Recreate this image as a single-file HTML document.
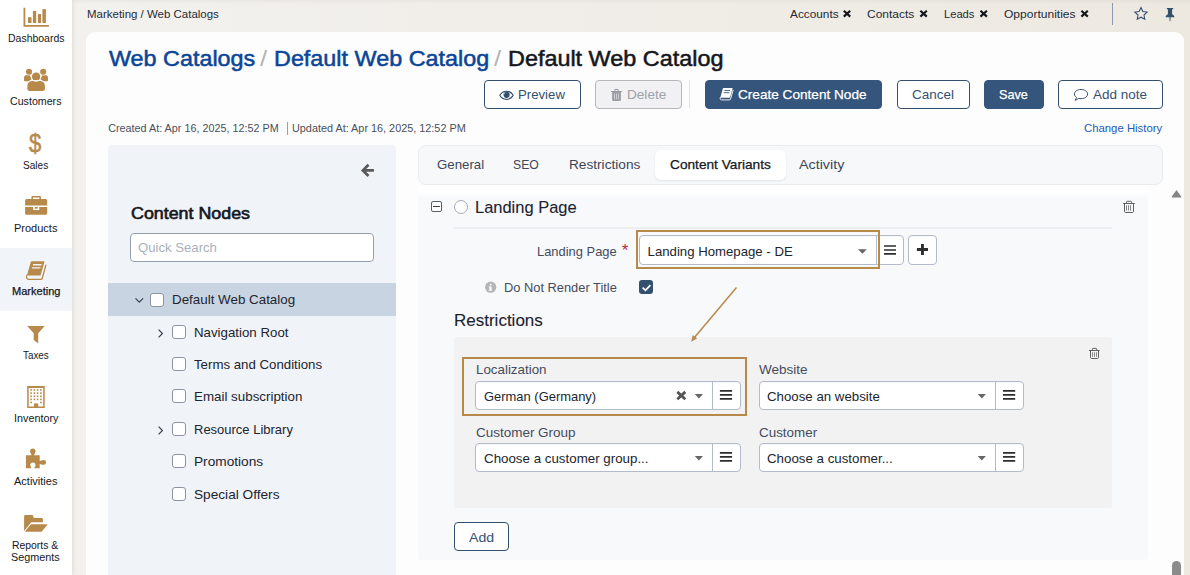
<!DOCTYPE html>
<html lang="en">
<head>
<meta charset="utf-8">
<title>Default Web Catalog - Web Catalogs - Marketing</title>
<style>
*{box-sizing:border-box;margin:0;padding:0}
html,body{width:1190px;height:575px;overflow:hidden}
body{position:relative;font-family:"Liberation Sans",sans-serif;color:#1d2330;background:linear-gradient(90deg,#f3f2ef 0%,#f0ede8 50%,#ede9e1 100%);font-size:13px}
.a,.t{position:absolute}
.t{white-space:nowrap;line-height:1.15;transform-origin:0 50%}
svg{position:absolute;overflow:visible}
.m{-webkit-text-stroke:.35px currentColor}
#side{left:0;top:0;width:72px;height:575px;background:#fff;box-shadow:1px 0 4px rgba(70,60,40,.13)}
#act{left:0;top:248px;width:72px;height:63px;background:#f1f4f9}
#card{left:86px;top:32px;width:1098px;height:543px;background:#fdfdfd;border-radius:9px 9px 0 0}
.btn{position:absolute;top:80px;height:29px;border-radius:4px;border:1px solid #33506f;background:#fff}
.pri{background:#35557c;border-color:#35557c}
.dis{background:#f1f1f3;border-color:#b7b7ba}
#lp{left:108px;top:145px;width:288px;height:430px;background:#f0f3f8;border-radius:4px 4px 0 0}
#selrow{left:108px;top:283px;width:288px;height:33px;background:#c9d4e3}
#qs{left:130px;top:233px;width:244px;height:29px;background:#fff;border:1px solid #979fae;border-radius:4px}
.cb{position:absolute;width:14px;height:14px;border:1px solid #8d93a2;border-radius:3px;background:#fff}
#tabs{left:418px;top:145px;width:745px;height:40px;background:#f7f8fa;border:1px solid #e9ebef;border-radius:8px}
#tabon{left:655px;top:150px;width:131px;height:30px;background:#fff;border-radius:6px;box-shadow:0 1px 2px rgba(30,40,60,.10)}
#cont{left:418px;top:185px;width:730px;height:375px;background:linear-gradient(180deg,#fff 0,#fff 7px,#f8f9fb 13px);border-radius:0 0 4px 4px}
#restr{left:454px;top:337px;width:658px;height:171px;background:#f2f2f2;border-radius:3px}
.s{position:absolute;height:29px;background:#fff;border:1px solid #b3bbca;border-radius:4px;box-shadow:inset 0 1px 1px rgba(0,0,0,.03)}
.sp{position:absolute;width:1px;height:27px;background:#b3bbca}
.hl{position:absolute;border:2px solid #b7894b}
.ln{position:absolute;background:#eceef1}
</style>
</head>
<body>
<div class="a" style="left:0;top:0;width:1190px;height:4px;background:linear-gradient(180deg,rgba(90,80,60,.06),rgba(90,80,60,0))"></div>
<div id="side" class="a"></div>
<div id="act" class="a"></div>
<div id="card" class="a"></div>
<div class="a" style="left:1112px;top:3px;width:1px;height:22px;background:#8f9bb5"></div>
<div class="btn" style="left:484px;width:97px"></div>
<div class="btn dis" style="left:595px;width:87px"></div>
<div class="a" style="left:689px;top:80px;width:1px;height:28px;background:#e2e2e2"></div>
<div class="btn pri" style="left:705px;width:177px"></div>
<div class="btn" style="left:897px;width:73px"></div>
<div class="btn pri" style="left:984px;width:60px"></div>
<div class="btn" style="left:1058px;width:105px"></div>
<div class="a" style="left:287px;top:122px;width:1px;height:13px;background:#9a9fa8"></div>
<div id="lp" class="a"></div>
<div id="selrow" class="a"></div>
<div id="qs" class="a"></div>
<div class="cb" style="left:150px;top:293px"></div>
<div class="cb" style="left:172px;top:325px"></div>
<div class="cb" style="left:172px;top:357px"></div>
<div class="cb" style="left:172px;top:389px"></div>
<div class="cb" style="left:172px;top:422px"></div>
<div class="cb" style="left:172px;top:454px"></div>
<div class="cb" style="left:172px;top:487px"></div>
<div id="tabs" class="a"></div>
<div id="tabon" class="a"></div>
<div id="cont" class="a"></div>
<div class="ln" style="left:454px;top:227px;width:658px;height:2px"></div>
<div class="a" style="left:454px;top:200.4px;width:14px;height:14px;border:1px solid #a4abba;border-radius:50%;background:#fff"></div>
<div class="a" style="left:431px;top:201px;width:11px;height:11px;border:1px solid #5b5f68;border-radius:2px;background:#fff"></div>
<div class="a" style="left:433px;top:206px;width:7px;height:1px;background:#444"></div>
<div class="s" style="left:639px;top:235.4px;width:238px;height:29.6px;border-radius:4px 0 0 4px"></div>
<div class="s" style="left:876px;top:235.4px;width:27.5px;height:29.6px;border-radius:0 4px 4px 0"></div>
<div class="s" style="left:908px;top:235.4px;width:29px;height:29.6px"></div>
<div class="hl" style="left:636px;top:230px;width:244px;height:39px"></div>
<div class="a" style="left:639px;top:279.6px;width:14px;height:14.7px;border-radius:3px;background:#33506f"></div>
<div id="restr" class="a"></div>
<div class="hl" style="left:462px;top:357px;width:285px;height:59px"></div>
<div class="s" style="left:475px;top:381px;width:266px"></div><div class="sp" style="left:712px;top:382px"></div>
<div class="s" style="left:759px;top:381px;width:265px"></div><div class="sp" style="left:995px;top:382px"></div>
<div class="s" style="left:475px;top:443px;width:266px"></div><div class="sp" style="left:712px;top:444px"></div>
<div class="s" style="left:759px;top:443px;width:265px"></div><div class="sp" style="left:995px;top:444px"></div>
<div class="btn" style="left:454px;top:522.4px;width:55px;height:28.8px"></div>
<div class="a" style="left:1172px;top:561px;width:9px;height:14px;border-radius:4.5px 4.5px 0 0;background:#8b8b8b"></div>

<svg width="1190" height="575" viewBox="0 0 1190 575" style="left:0;top:0;pointer-events:none">
<g fill="#b7894b" stroke="none">
<!-- dashboards: bar chart -->
<path d="M23.5 7.8h1.8v17.2h23.6v1.7H23.5z"/>
<rect x="28" y="17.2" width="3.5" height="5.8"/><rect x="32.9" y="11" width="3.3" height="12"/><rect x="37.9" y="14.1" width="3.2" height="8.9"/><rect x="42.4" y="9.1" width="3.5" height="13.9"/>
<!-- customers: users -->
<path d="M24 80.2v-2.2a3 3 0 0 1 3-3h3.2a6 6 0 0 0 1.6 4.300a5 5 0 0 0-2.600 1.900H25a1 1 0 0 1-1-1z"/>
<path d="M48 80.200v-2.200a3 3 0 0 0-3-3h-3.200a6 6 0 0 1-1.600 4.300a5 5 0 0 1 2.600 1.900H47a1 1 0 0 0 1-1z"/>
<circle cx="29" cy="71.800" r="3.600" fill="#fff"/><circle cx="43.200" cy="71.800" r="3.600" fill="#fff"/><circle cx="29" cy="71.800" r="3.050"/><circle cx="43.200" cy="71.800" r="3.050"/>
<circle cx="36.100" cy="76.600" r="4.300"/>
<path d="M27.200 88.800v-3.300a4.500 4.500 0 0 1 4.500-4.500h8.800a4.500 4.500 0 0 1 4.500 4.500v3.300a2.100 2.100 0 0 1-2.100 2.100H29.300a2.100 2.100 0 0 1-2.100-2.100z"/>
<!-- products: briefcase -->
<path d="M31.400 199.200v-2a1.300 1.300 0 0 1 1.300-1.300h7a1.300 1.300 0 0 1 1.300 1.300v2h-1.600v-1.600h-6.400v1.600z"/>
<path d="M26.600 199.100h19.100a1.500 1.500 0 0 1 1.500 1.500v5H25.100v-5a1.500 1.500 0 0 1 1.500-1.500z"/>
<path d="M25.100 207h8.100v3h6v-3h8v6.300a1.500 1.500 0 0 1-1.500 1.500H26.600a1.500 1.500 0 0 1-1.500-1.500z"/>
<rect x="34.800" y="207" width="2.800" height="1.700"/>
<!-- marketing: book -->
<path d="M32 261.200h11.500a.9.900 0 0 1 .860 1.150l-3.700 12.600a.9.900 0 0 1-.860.650H28a.9.900 0 0 1-.860-1.150l3.700-12.600a1.200 1.200 0 0 1 1.160-.650z"/>
<!-- taxes: filter -->
<path d="M27.200 326.100h17.500l-6.500 7.200v10.200l-4.500-3.500v-6.700z"/>
<!-- inventory: building -->
<path d="M27.200 386h17.500v21.900H27.200zM28.700 387.900v18.500h14.500v-18.500z" fill-rule="evenodd"/>
<rect x="34" y="403.400" width="4.200" height="3.800"/>
<!-- activities: puzzle -->
<path d="M25.900 455.200h5.600c.3-.6-1.400-1.800-1.400-4a2.700 2.700 0 0 1 5.400 0c0 2.200-1.700 3.400-1.400 4h5.600v5.600c.5.300 1.900-.8 4-.8a2.400 2.400 0 0 1 0 4.800c-2.100 0-3.500-1.100-4-.8v4.300h-5.400c-.4-.5 1.200-1.300 1.200-3.200a2.600 2.600 0 0 0-5.200 0c0 1.900 1.500 2.700 1.100 3.200h-5.500z"/>
<!-- reports: folder open -->
<path d="M25.300 515h6.700a1.200 1.200 0 0 1 1.100.8l.7 2.100h7.900a1.200 1.200 0 0 1 1.200 1.200v3.200H31.800a1.500 1.500 0 0 0-1.200.6l-6.500 8.200V516.200a1.200 1.200 0 0 1 1.200-1.200z"/>
<path d="M31.700 524.200h15.100a.5.500 0 0 1 .4.800l-5.200 6.300a1.200 1.200 0 0 1-.9.400H25.600a.4.400 0 0 1-.3-.7l5.500-6.400a1.200 1.200 0 0 1 .9-.4z"/>
</g>
<!-- users white gaps -->
<g fill="none" stroke="#fff" stroke-width=".9">
<circle cx="36.100" cy="76.600" r="4.750"/>
<path d="M26.750 88.800v-3.300a4.950 4.950 0 0 1 4.950-4.950h8.800a4.950 4.950 0 0 1 4.950 4.950v3.300"/>
</g>
<!-- building dots -->
<g fill="#b7894b">
<rect x="30.300" y="389.200" width="1.600" height="1.600"/><rect x="33.600" y="389.200" width="1.600" height="1.600"/><rect x="36.800" y="389.200" width="1.600" height="1.600"/><rect x="40.100" y="389.200" width="1.600" height="1.600"/>
<rect x="30.300" y="392.300" width="1.600" height="1.600"/><rect x="33.600" y="392.300" width="1.600" height="1.600"/><rect x="36.800" y="392.300" width="1.600" height="1.600"/><rect x="40.100" y="392.300" width="1.600" height="1.600"/>
<rect x="30.300" y="395.500" width="1.600" height="1.600"/><rect x="33.600" y="395.500" width="1.600" height="1.600"/><rect x="36.800" y="395.500" width="1.600" height="1.600"/><rect x="40.100" y="395.500" width="1.600" height="1.600"/>
<rect x="30.300" y="398.600" width="1.600" height="1.600"/><rect x="33.600" y="398.600" width="1.600" height="1.600"/><rect x="36.800" y="398.600" width="1.600" height="1.600"/><rect x="40.100" y="398.600" width="1.600" height="1.600"/>
<rect x="30.300" y="401.700" width="1.600" height="1.600"/><rect x="40.100" y="401.700" width="1.600" height="1.600"/>
</g>
<!-- book details (sidebar) -->
<g stroke="#f1f4f9" stroke-width="1.300" fill="none"><path d="M33 264.750h8.600M31.900 267.950h8.600"/></g>
<path d="M26.900 275.300c-.9 1.700-.3 4 1.900 4h12.200a1.200 1.200 0 0 0 1.150-.85l3.750-13.300" fill="none" stroke="#b7894b" stroke-width="1.300" stroke-linecap="round"/>
<!-- top bar: close x -->
<g stroke="#15171c" stroke-width="2.200" fill="none">
<path d="M843.800 10.800l6.400 5.800M850.200 10.800l-6.400 5.800"/>
<path d="M920.400 10.800l6.400 5.800M926.800 10.800l-6.400 5.800"/>
<path d="M980.500 10.800l6.400 5.800M986.900 10.800l-6.400 5.800"/>
<path d="M1081.400 10.800l6.400 5.800M1087.800 10.800l-6.400 5.800"/>
</g>
<!-- star -->
<path d="M1141 7.600l1.850 3.900 4.250.55-3.100 2.950.75 4.200-3.750-2.050-3.750 2.050.75-4.200-3.100-2.950 4.250-.55z" fill="none" stroke="#33506f" stroke-width="1.100" stroke-linejoin="miter"/>
<!-- pin -->
<path d="M1166.800 7.900h6.400v1.300h-1.100v5.100c1.300.6 2.300 1.700 2.300 3h-3.900v3.200l-.5 1-.5-1v-3.200h-3.900c0-1.300 1-2.400 2.300-3v-5.100h-1.100z" fill="#33506f"/>
<!-- eye -->
<path d="M499.800 95.300C501.300 92.600 503.700 91.200 506.500 91.200S511.700 92.600 513.200 95.300C511.700 98 509.300 99.400 506.500 99.400S501.300 98 499.800 95.300z" fill="#fff" stroke="#33506f" stroke-width="1.100"/>
<circle cx="506.600" cy="94.800" r="3.100" fill="#33506f"/>
<path d="M505.100 92.800a2.200 2.200 0 0 0-.9 1.400" stroke="#fff" stroke-width=".7" fill="none"/>
<!-- trash (delete, disabled) -->
<g fill="#9b9da4">
<path d="M611 90.900h11v1.100h-11zM614.400 90.900v-1a.9.900 0 0 1 .9-.9h2.400a.9.900 0 0 1 .9.900v1h-1v-.8h-2.200v.8z"/>
<path d="M612.100 92h8.800v7.700a1.200 1.200 0 0 1-1.200 1.200h-6.400a1.200 1.200 0 0 1-1.200-1.200zM614.150 93.600v5.700h.6v-5.700zM616.200 93.600v5.700h.6v-5.700zM618.250 93.600v5.700h.6v-5.700z" fill-rule="evenodd"/>
</g>
<!-- book (create content node, white) -->
<g>
<path d="M723.800 88h8.200a.6.600 0 0 1 .57.770l-2.450 8.500a.6.600 0 0 1-.57.430H721a.6.600 0 0 1-.57-.770l2.450-8.500a.8.800 0 0 1 .92-.43z" fill="#fff"/>
<path d="M724.500 90.500h5.600M723.800 92.700h5.600" stroke="#35557c" stroke-width=".9" fill="none"/>
<path d="M720.300 97.500c-.6 1.100-.2 2.400 1.200 2.400h8.200a.8.800 0 0 0 .77-.57l2.630-9.030" fill="none" stroke="#fff" stroke-width=".9" stroke-linecap="round"/>
</g>
<!-- comment-o -->
<path d="M1081 89.500c3.700 0 6.600 2 6.600 4.600s-2.900 4.600-6.600 4.600c-.8 0-1.600-.1-2.300-.3-.9.800-2.100 1.500-3.600 1.900.7-.8 1.200-1.800 1.400-2.900-1.300-.8-2.100-2-2.100-3.300 0-2.600 2.900-4.600 6.600-4.600z" fill="none" stroke="#33506f" stroke-width="1"/>
<!-- arrow-left -->
<path d="M368.500 164.800l-5.600 5.600 5.600 5.600M363.300 170.400h10.600" fill="none" stroke="#5a5a5a" stroke-width="2.700" stroke-linejoin="miter"/>
<!-- tree chevrons -->
<g fill="none" stroke="#3a3f50" stroke-width="1.200">
<path d="M135.500 298.300l3.800 3.800 3.800-3.800"/>
<path d="M158.600 329.700l3.800 3.800-3.800 3.800"/>
<path d="M158.600 426.700l3.800 3.800-3.800 3.800"/>
</g>
<!-- trash-o x2 -->
<g fill="none" stroke="#606060" stroke-width="1">
<path d="M1123.200 203.500h11.600M1126.500 203.500v-1.300a.9.900 0 0 1 .9-.9h3.200a.9.900 0 0 1 .9.900v1.300M1124.500 203.800v7.500a1.200 1.200 0 0 0 1.200 1.200h6.600a1.200 1.200 0 0 0 1.200-1.200v-7.500"/>
<path d="M1126.500 205.200v5.400M1128.500 205.200v5.400M1130.500 205.200v5.400M1132 205.200" stroke-width=".75"/>
<path d="M1089 350.500h10.600M1092.300 350.500v-1.300a.8.800 0 0 1 .8-.8h2.800a.8.800 0 0 1 .8.800v1.300M1090.500 350.800v6.600a1.100 1.100 0 0 0 1.100 1.100h5.800a1.100 1.100 0 0 0 1.100-1.100v-6.600"/>
<path d="M1092.500 352.200v4.700M1094.500 352.200v4.700M1096.500 352.200v4.700" stroke-width=".7"/>
</g>
<!-- carets -->
<g fill="#666">
<path d="M858 249.200h8.800l-4.400 4.600z"/>
<path d="M694.800 393.900h8.200l-4.100 4.600z"/>
<path d="M977.700 393.900h8.200l-4.100 4.600z"/>
<path d="M694.800 455.900h8.200l-4.100 4.600z"/>
<path d="M977.700 455.900h8.200l-4.100 4.600z"/>
</g>
<!-- hamburgers -->
<g fill="#2e2e2e">
<path d="M884 245.200h12v1.600h-12zM884 249.200h12v1.600h-12zM884 253.100h12v1.600h-12z"/>
<path d="M719.900 390.100h12.200v1.700h-12.200zM719.900 394h12.200v1.700h-12.200zM719.900 398h12.200v1.700h-12.200z"/>
<path d="M1003 390.100h12.200v1.700H1003zM1003 394h12.200v1.700H1003zM1003 398h12.200v1.700H1003z"/>
<path d="M719.900 452.100h12.200v1.700h-12.200zM719.900 456h12.200v1.700h-12.200zM719.900 460h12.200v1.700h-12.200z"/>
<path d="M1003 452.100h12.200v1.700H1003zM1003 456h12.200v1.700H1003zM1003 460h12.200v1.700H1003z"/>
<!-- plus -->
<path d="M921 244h2.900v4.100h4.100v2.800h-4.100v4.100H921v-4.100h-4.100v-2.800h4.100z"/>
</g>
<!-- clear x in select -->
<path d="M677.300 391.900l8 7.300M685.300 391.900l-8 7.300" stroke="#555" stroke-width="2.800" fill="none"/>
<!-- info circle -->
<circle cx="490.700" cy="287.200" r="5.600" fill="#b5b5b5"/>
<path d="M490 284h1.500v1.400H490zM489.400 286.500h2.100v3.200h.7v1h-3.400v-1h.7v-2.200h-.7v-1z" fill="#fff"/>
<!-- check -->
<path d="M642.600 287.700l2.900 2.700 4.900-5.300" fill="none" stroke="#fff" stroke-width="1.700"/>
<!-- annotation arrow -->
<path d="M736.500 287.600L694 337.900" stroke="#b7894b" stroke-width="1.500" fill="none"/>
<path d="M691.100 341.800l1.700-6.800 4.300 3.600z" fill="#b7894b"/>
<!-- scrollbar up arrow -->
<path d="M1171.800 196.400l4.700-6.300 4.700 6.300a.7.700 0 0 1-.6 1.100h-8.200a.7.700 0 0 1-.6-1.100z" fill="#858585"/>
</svg>

<span class="t" style="left:7.6px;top:32.06px;font-size:10.6px;transform:scaleX(0.989);color:#15171c;">Dashboards</span>
<span class="t" style="left:10.0px;top:95.06px;font-size:10.6px;transform:scaleX(1.005);color:#15171c;">Customers</span>
<span class="t" style="left:23.4px;top:159.06px;font-size:10.6px;transform:scaleX(0.951);color:#15171c;">Sales</span>
<span class="t" style="left:14.1px;top:222.06px;font-size:10.6px;transform:scaleX(1.038);color:#15171c;">Products</span>
<span class="t" style="left:11.8px;top:285.06px;font-size:10.6px;transform:scaleX(1.041);color:#15171c;-webkit-text-stroke:.25px currentColor;">Marketing</span>
<span class="t" style="left:22.9px;top:349.06px;font-size:10.6px;transform:scaleX(0.928);color:#15171c;">Taxes</span>
<span class="t" style="left:13.6px;top:412.06px;font-size:10.6px;transform:scaleX(1.019);color:#15171c;">Inventory</span>
<span class="t" style="left:14.1px;top:475.06px;font-size:10.6px;transform:scaleX(1.038);color:#15171c;">Activities</span>
<span class="t" style="left:12.3px;top:539.06px;font-size:10.6px;transform:scaleX(0.981);color:#15171c;">Reports &amp;</span>
<span class="t" style="left:11.3px;top:551.06px;font-size:10.6px;transform:scaleX(1.021);color:#15171c;">Segments</span>
<span class="t" style="left:29.1px;top:129.05px;font-size:25px;transform:scaleX(0.884);color:#b7894b;-webkit-text-stroke:.55px currentColor;">$</span>
<span class="t" style="left:86.7px;top:8.06px;font-size:11.3px;transform:scaleX(1.016);color:#262b36;">Marketing / Web Catalogs</span>
<span class="t" style="left:789.5px;top:8.06px;font-size:11.3px;transform:scaleX(1.046);color:#262b36;">Accounts</span>
<span class="t" style="left:867.3px;top:8.06px;font-size:11.3px;transform:scaleX(1.061);color:#262b36;">Contacts</span>
<span class="t" style="left:944.3px;top:8.06px;font-size:11.3px;transform:scaleX(0.988);color:#262b36;">Leads</span>
<span class="t" style="left:1004.0px;top:8.06px;font-size:11.3px;transform:scaleX(1.065);color:#262b36;">Opportunities</span>
<span class="t" style="left:109.4px;top:47.05px;font-size:21.2px;transform:scaleX(1.102);color:#0b4597;-webkit-text-stroke:.5px currentColor;">Web Catalogs</span>
<span class="t" style="left:259.6px;top:47.05px;font-size:21.2px;transform:scaleX(1.220);letter-spacing:1.57px;color:#b4b4b4;">/</span>
<span class="t" style="left:274.4px;top:47.05px;font-size:21.2px;transform:scaleX(1.103);color:#0b4597;-webkit-text-stroke:.5px currentColor;">Default Web Catalog</span>
<span class="t" style="left:493.6px;top:47.05px;font-size:21.2px;transform:scaleX(1.220);letter-spacing:1.57px;color:#b4b4b4;">/</span>
<span class="t" style="left:508.4px;top:47.05px;font-size:21.2px;transform:scaleX(1.104);color:#15171c;-webkit-text-stroke:.5px currentColor;">Default Web Catalog</span>
<span class="t" style="left:518.4px;top:87.06px;font-size:13.3px;transform:scaleX(0.992);color:#33506f;">Preview</span>
<span class="t" style="left:626.6px;top:87.06px;font-size:13.3px;transform:scaleX(1.022);color:#a0a2a8;">Delete</span>
<span class="t" style="left:737.9px;top:87.06px;font-size:13.3px;transform:scaleX(1.023);color:#fff;-webkit-text-stroke:.25px #fff;">Create Content Node</span>
<span class="t" style="left:912.1px;top:87.06px;font-size:13.3px;transform:scaleX(1.015);color:#33506f;">Cancel</span>
<span class="t" style="left:999.4px;top:87.06px;font-size:13.3px;transform:scaleX(0.950);color:#fff;-webkit-text-stroke:.25px #fff;">Save</span>
<span class="t" style="left:1092.8px;top:87.06px;font-size:13.3px;transform:scaleX(1.014);color:#33506f;">Add note</span>
<span class="t" style="left:108.2px;top:122.06px;font-size:10.8px;color:#4a4f5a;">Created At: Apr 16, 2025, 12:52 PM</span>
<span class="t" style="left:292.2px;top:122.06px;font-size:10.8px;transform:scaleX(1.005);color:#4a4f5a;">Updated At: Apr 16, 2025, 12:52 PM</span>
<span class="t" style="left:1084.3px;top:122.06px;font-size:11.3px;transform:scaleX(1.004);color:#1c5bb3;">Change History</span>
<span class="t" style="left:130.5px;top:205.05px;font-size:16px;transform:scaleX(1.115);color:#15171c;-webkit-text-stroke:.6px currentColor;">Content Nodes</span>
<span class="t" style="left:137.9px;top:241.06px;font-size:12.6px;transform:scaleX(1.044);color:#aab0bc;">Quick Search</span>
<span class="t" style="left:172.2px;top:292.05px;font-size:13.2px;transform:scaleX(1.014);color:#21252e;">Default Web Catalog</span>
<span class="t" style="left:193.5px;top:325.05px;font-size:13.2px;transform:scaleX(1.007);color:#21252e;">Navigation Root</span>
<span class="t" style="left:193.5px;top:357.05px;font-size:13.2px;transform:scaleX(1.004);color:#21252e;">Terms and Conditions</span>
<span class="t" style="left:193.5px;top:389.05px;font-size:13.2px;transform:scaleX(1.013);color:#21252e;">Email subscription</span>
<span class="t" style="left:193.5px;top:422.05px;font-size:13.2px;transform:scaleX(0.985);color:#21252e;">Resource Library</span>
<span class="t" style="left:193.5px;top:454.05px;font-size:13.2px;transform:scaleX(1.037);color:#21252e;">Promotions</span>
<span class="t" style="left:193.5px;top:487.05px;font-size:13.2px;transform:scaleX(1.035);color:#21252e;">Special Offers</span>
<span class="t" style="left:436.6px;top:157.05px;font-size:13.2px;transform:scaleX(1.006);color:#3d4658;">General</span>
<span class="t" style="left:513.3px;top:157.05px;font-size:13.2px;transform:scaleX(0.926);color:#3d4658;">SEO</span>
<span class="t" style="left:568.6px;top:157.05px;font-size:13.2px;transform:scaleX(1.035);color:#3d4658;">Restrictions</span>
<span class="t" style="left:669.5px;top:157.05px;font-size:13.2px;transform:scaleX(1.037);color:#15171c;-webkit-text-stroke:.25px currentColor;">Content Variants</span>
<span class="t" style="left:799.3px;top:157.05px;font-size:13.2px;transform:scaleX(1.085);color:#3d4658;">Activity</span>
<span class="t" style="left:474.9px;top:198.05px;font-size:16.2px;transform:scaleX(1.017);color:#1d2330;-webkit-text-stroke:.1px currentColor;">Landing Page</span>
<span class="t" style="left:536.7px;top:244.05px;font-size:13.2px;transform:scaleX(0.979);color:#454c5c;">Landing Page</span>
<span class="t" style="left:621.8px;top:241.05px;font-size:17px;color:#b3304a;">*</span>
<span class="t" style="left:647.6px;top:244.05px;font-size:13.2px;color:#21252e;">Landing Homepage - DE</span>
<span class="t" style="left:503.5px;top:280.05px;font-size:13.2px;transform:scaleX(0.974);color:#454c5c;">Do Not Render Title</span>
<span class="t" style="left:453.7px;top:311.05px;font-size:16.2px;transform:scaleX(1.050);color:#1d2330;-webkit-text-stroke:.1px currentColor;">Restrictions</span>
<span class="t" style="left:475.6px;top:362.05px;font-size:13.2px;transform:scaleX(1.012);color:#454c5c;">Localization</span>
<span class="t" style="left:759.1px;top:362.05px;font-size:13.2px;transform:scaleX(1.023);color:#454c5c;">Website</span>
<span class="t" style="left:475.6px;top:425.05px;font-size:13.2px;transform:scaleX(1.021);color:#454c5c;">Customer Group</span>
<span class="t" style="left:759.3px;top:425.05px;font-size:13.2px;transform:scaleX(1.018);color:#454c5c;">Customer</span>
<span class="t" style="left:483.7px;top:389.05px;font-size:13.2px;transform:scaleX(0.981);color:#21252e;">German (Germany)</span>
<span class="t" style="left:767.0px;top:389.05px;font-size:13.2px;transform:scaleX(1.006);color:#21252e;">Choose an website</span>
<span class="t" style="left:483.7px;top:451.05px;font-size:13.2px;transform:scaleX(1.011);color:#21252e;">Choose a customer group...</span>
<span class="t" style="left:767.0px;top:451.05px;font-size:13.2px;transform:scaleX(1.009);color:#21252e;">Choose a customer...</span>
<span class="t" style="left:468.6px;top:530.06px;font-size:13.3px;transform:scaleX(1.060);color:#33506f;">Add</span>
</body>
</html>
